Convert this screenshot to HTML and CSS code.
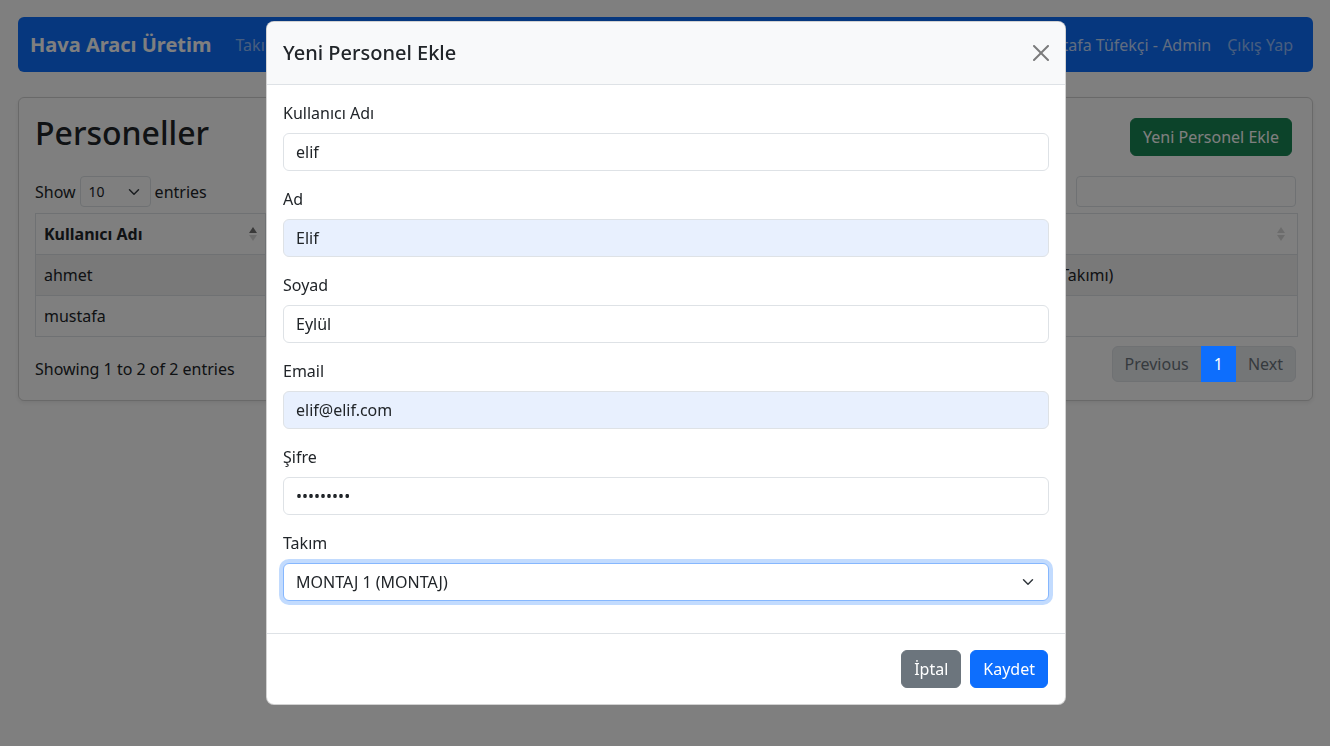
FILE: index.html
```html
<!DOCTYPE html>
<html lang="tr">
<head>
<meta charset="utf-8">
<title>Personeller</title>
<link rel="stylesheet" href="styles.css">
</head>
<body>
<div class="page">
  <nav class="navbar">
    <div class="nav-left">
      <span class="brand">Hava Aracı Üretim</span>
      <a class="nav-link">Takımlar</a>
      <a class="nav-link">Parçalar</a>
      <a class="nav-link">Uçaklar</a>
      <a class="nav-link active">Personeller</a>
    </div>
    <div class="nav-right">
      <span class="nav-text">Mustafa Tüfekçi - Admin</span>
      <a class="nav-link">Çıkış Yap</a>
    </div>
  </nav>

  <div class="card">
    <div class="card-head">
      <h2 class="card-title">Personeller</h2>
      <button class="btn btn-success">Yeni Personel Ekle</button>
    </div>
    <div class="dt-top">
      <label class="dt-length">Show
        <span class="select-sm">10
          <svg class="chev-sm" viewBox="0 0 16 16" width="16" height="12"><path d="M2 5l6 6 6-6" fill="none" stroke="#343a40" stroke-width="2" stroke-linecap="round" stroke-linejoin="round"/></svg>
        </span>
        entries</label>
      <label class="dt-search">Search:<span class="search-input"></span></label>
    </div>
    <table class="table">
      <thead>
        <tr>
          <th class="c1"><div class="th-in">Kullanıcı Adı<span class="sort"><i class="up on"></i><i class="down"></i></span></div></th>
          <th class="c2"><div class="th-in">Ad<span class="sort"><i class="up"></i><i class="down"></i></span></div></th>
          <th class="c3"><div class="th-in">Soyad<span class="sort"><i class="up"></i><i class="down"></i></span></div></th>
          <th class="c4"><div class="th-in">Email<span class="sort"><i class="up"></i><i class="down"></i></span></div></th>
          <th class="c5"><div class="th-in">Takım<span class="sort"><i class="up"></i><i class="down"></i></span></div></th>
        </tr>
      </thead>
      <tbody>
        <tr class="odd"><td>ahmet</td><td>Ahmet</td><td>Yılmaz</td><td>ahmet@ahmet.com</td><td>KANAT 1 (Kanat Takımı)</td></tr>
        <tr><td>mustafa</td><td>Mustafa</td><td>Tüfekçi</td><td>mustafa@admin.com</td><td></td></tr>
      </tbody>
    </table>
    <div class="dt-bottom">
      <div class="dt-info">Showing 1 to 2 of 2 entries</div>
      <ul class="pagination">
        <li class="page-item disabled">Previous</li>
        <li class="page-item active">1</li>
        <li class="page-item disabled">Next</li>
      </ul>
    </div>
  </div>
</div>

<div class="backdrop"></div>

<div class="modal">
  <div class="modal-content">
    <div class="modal-header">
      <h5 class="modal-title">Yeni Personel Ekle</h5>
      <button class="btn-close" aria-label="Close">
        <svg viewBox="0 0 16 16" width="16" height="16"><path fill="#000" d="M.293.293a1 1 0 0 1 1.414 0L8 6.586 14.293.293a1 1 0 1 1 1.414 1.414L9.414 8l6.293 6.293a1 1 0 0 1-1.414 1.414L8 9.414l-6.293 6.293a1 1 0 0 1-1.414-1.414L6.586 8 .293 1.707a1 1 0 0 1 0-1.414z"/></svg>
      </button>
    </div>
    <div class="modal-body">
      <div class="field">
        <label class="form-label">Kullanıcı Adı</label>
        <input class="form-control" type="text" value="elif">
      </div>
      <div class="field">
        <label class="form-label">Ad</label>
        <input class="form-control autofill" type="text" value="Elif">
      </div>
      <div class="field">
        <label class="form-label">Soyad</label>
        <input class="form-control" type="text" value="Eylül">
      </div>
      <div class="field">
        <label class="form-label">Email</label>
        <input class="form-control autofill" type="email" value="elif@elif.com">
      </div>
      <div class="field">
        <label class="form-label">Şifre</label>
        <input class="form-control" type="password" value="elif12345">
      </div>
      <div class="field">
        <label class="form-label">Takım</label>
        <div class="select-wrap">
          <select class="form-select focus">
            <option>MONTAJ 1 (MONTAJ)</option>
          </select>
          <svg class="chev" viewBox="0 0 16 16" width="16" height="12"><path d="M2 5l6 6 6-6" fill="none" stroke="#343a40" stroke-width="2" stroke-linecap="round" stroke-linejoin="round"/></svg>
        </div>
      </div>
    </div>
    <div class="modal-footer">
      <button class="btn btn-secondary">İptal</button>
      <button class="btn btn-primary">Kaydet</button>
    </div>
  </div>
</div>
</body>
</html>
```
FILE: styles.css
```css
* { box-sizing: border-box; }
html, body { margin: 0; height: 100%; }
body {
  font-family: "Noto Sans", "Open Sans", sans-serif;
  font-size: 16px;
  line-height: 1.5;
  color: #212529;
  background: #fff;
  overflow: hidden;
}
.page { padding: 17px 17px 17px 18px; }

/* navbar */
.navbar {
  background: #0d6efd;
  border-radius: 6px;
  height: 55px;
  padding: 0 12px;
  display: flex;
  align-items: center;
  justify-content: space-between;
}
.nav-left, .nav-right { display: flex; align-items: center; }
.brand {
  color: #fff;
  font-size: 20px;
  font-weight: 700;
  margin-right: 16px;
  padding: 5px 0;
}
.nav-link { color: rgba(255,255,255,.55); padding: 8px; }
.nav-text { color: rgba(255,255,255,.75); padding: 8px; }

/* card */
.card {
  margin-top: 25px;
  border: 1px solid rgba(0,0,0,.175);
  border-radius: 6px;
  padding: 16px;
  box-shadow: 0 2px 4px rgba(0,0,0,.075);
}
.card-head {
  display: flex;
  align-items: center;
  justify-content: space-between;
  margin-bottom: 16px;
  padding-right: 4px;
}
.card-title { margin: 0 0 8px; font-size: 32px; font-weight: 500; line-height: 1.2; }

.btn {
  font-family: inherit;
  font-size: 16px;
  line-height: 24px;
  padding: 6px 12px;
  border: 1px solid transparent;
  border-radius: 6px;
  color: #fff;
  cursor: pointer;
}
.btn-success { background: #198754; border-color: #198754; }
.btn-secondary { background: #6c757d; border-color: #6c757d; }
.btn-primary { background: #0d6efd; border-color: #0d6efd; }

.dt-top { display: flex; justify-content: space-between; align-items: center; height: 31px; }
.dt-length, .dt-search { display: flex; align-items: center; gap: 4px; }
.select-sm {
  display: inline-flex;
  align-items: center;
  justify-content: space-between;
  width: 71px;
  height: 31px;
  padding: 0 8px;
  border: 1px solid #dee2e6;
  border-radius: 4px;
  font-size: 14px;
}
.chev-sm { width: 16px; height: 12px; }
.search-input {
  display: inline-block;
  width: 220px;
  height: 31px;
  margin-left: 6px;
  border: 1px solid #dee2e6;
  border-radius: 4px;
}

.table {
  width: calc(100% + 2px);
  margin-top: 6px;
  margin-bottom: 7px;
  border-collapse: collapse;
  table-layout: fixed;
}
.table th, .table td {
  border: 1px solid #dee2e6;
  padding: 8px;
  text-align: left;
  height: 41px;
  white-space: nowrap;
  overflow: hidden;
}
.table th { font-weight: 700; }
.c1 { width: 230px; }
.c2 { width: 180px; }
.c3 { width: 180px; }
.c4 { width: 306px; }
.th-in { display: flex; justify-content: space-between; align-items: center; }
.sort { display: flex; flex-direction: column; gap: 2px; }
.c5 .sort { margin-right: 4px; }
.sort i { display: block; width: 0; height: 0; border-left: 4px solid transparent; border-right: 4px solid transparent; }
.sort .up { border-bottom: 6px solid rgba(0,0,0,.15); }
.sort .down { border-top: 6px solid rgba(0,0,0,.15); }
.sort .up.on { border-bottom-color: rgba(0,0,0,.55); }
.table tr.odd td { background: rgba(0,0,0,.05); }

.dt-bottom { display: flex; justify-content: space-between; align-items: flex-start; }
.dt-info { padding-top: 12.6px; }
.pagination { display: flex; list-style: none; margin: 2px 0; padding: 0; }
.page-item {
  padding: 5px 12px;
  line-height: 24px;
  border: 1px solid #dee2e6;
  margin-left: -1px;
}
.page-item:first-child { border-radius: 6px 0 0 6px; }
.page-item:last-child { border-radius: 0 6px 6px 0; }
.page-item.disabled { background: #e9ecef; color: #6c757d; }
.page-item.active { background: #0d6efd; border-color: #0d6efd; color: #fff; position: relative; z-index: 1; }

/* modal */
.backdrop { position: fixed; inset: 0; background: rgba(0,0,0,.5); }
.modal {
  position: fixed;
  top: 21px;
  left: 266px;
  width: 800px;
}
.modal-content {
  background: #fff;
  border: 1px solid rgba(0,0,0,.175);
  border-radius: 8px;
  overflow: hidden;
}
.modal-header {
  background: #f8f9fa;
  padding: 16px;
  display: flex;
  align-items: center;
  justify-content: space-between;
  border-bottom: 1px solid #dee2e6;
}
.modal-title { margin: 0; font-size: 20px; font-weight: 500; line-height: 30px; }
.btn-close {
  width: 24px; height: 24px;
  padding: 4px;
  margin: -4px -4px -4px auto;
  border: 0;
  background: transparent;
  opacity: .5;
  display: flex; align-items: center; justify-content: center;
}
.modal-body { padding: 16px; }
.field { margin-bottom: 16px; }
.form-label { display: block; margin-bottom: 8px; line-height: 24px; }
.form-control, .form-select {
  display: block;
  width: 100%;
  height: 38px;
  padding: 6px 12px;
  font-family: inherit;
  font-size: 16px;
  line-height: 24px;
  color: #212529;
  background: #fff;
  border: 1px solid #dee2e6;
  border-radius: 6px;
  outline: none;
}
.form-control.autofill { background: #e8f0fe; }
.select-wrap { position: relative; }
.form-select { appearance: none; -webkit-appearance: none; padding-right: 36px; }
.form-select.focus { border-color: #86b7fe; box-shadow: 0 0 0 4px rgba(13,110,253,.25); }
.chev { position: absolute; right: 13px; top: 13px; pointer-events: none; }
.modal-footer {
  border-top: 1px solid #dee2e6;
  padding: 12px 13px 12px 12px;
  display: flex;
  justify-content: flex-end;
}
.modal-footer .btn { margin: 4px; }
.modal-footer .btn-secondary { margin-right: 5px; }
```
